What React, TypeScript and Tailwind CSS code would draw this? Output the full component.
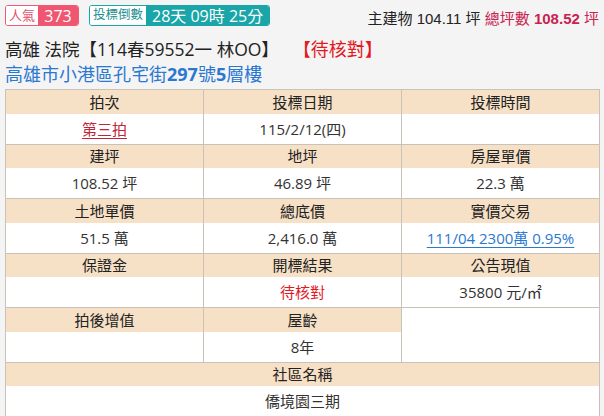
import type { ReactNode } from 'react'

const FONT = '"Open Sans", "Noto Sans CJK TC", sans-serif'

type Cell = { text: ReactNode; span?: number; rowSpan?: number }

function HeadRow({ cells }: { cells: Cell[] }) {
  return (
    <tr className="h-[24px] bg-[#f6e0c6]">
      {cells.map((c, i) => (
        <td
          key={i}
          colSpan={c.span}
          rowSpan={c.rowSpan}
          className={c.rowSpan ? 'border border-[#c9c2b8] bg-white' : 'border-x border-t border-[#c9c2b8] text-center text-[15px] leading-[22px] text-[#222]'}
        >
          {c.text}
        </td>
      ))}
    </tr>
  )
}

function ValueRow({ cells }: { cells: Cell[] }) {
  return (
    <tr className="h-[30px] bg-white">
      {cells.map((c, i) => (
        <td
          key={i}
          colSpan={c.span}
          className="border-x border-b border-[#c9c2b8] text-center text-[15px] leading-[30px] text-[#333]"
        >
          {c.text}
        </td>
      ))}
    </tr>
  )
}

export default function App() {
  return (
    <div className="h-[416px] w-[604px] overflow-hidden bg-[#f4f4f5]" style={{ fontFamily: FONT }}>
      {/* top badges */}
      <div className="flex h-[30px] items-center px-[5px] pt-[1px]">
        <div className="flex h-[21px] overflow-hidden rounded-[3px] border border-[#ef5a75]">
          <span className="flex w-[32px] items-center justify-center bg-white text-[13px] text-[#e0506c]">人氣</span>
          <span className="flex w-[40px] items-center justify-center bg-[#f0566f] text-[16px] text-white">373</span>
        </div>
        <div className="ml-[10px] flex h-[21px] overflow-hidden rounded-[3px] border border-[#1aa5a6]">
          <span className="flex w-[56px] items-center justify-center bg-white text-[12.5px] text-[#1a8f91]">投標倒數</span>
          <span className="flex items-center justify-center whitespace-nowrap bg-[#1aa6a8] px-[6px] text-[16px] text-white">28天 09時 25分</span>
        </div>
        <div className="ml-auto pt-[7px] text-[15px] text-[#222]" style={{ fontFamily: '"Liberation Sans", "Noto Sans CJK TC", sans-serif' }}>
          主建物 104.11 坪 <span className="text-[#c8234f]">總坪數 <b>108.52</b> 坪</span>
        </div>
      </div>

      {/* title */}
      <div className="flex h-[28px] items-center px-[5px] pt-[10px] text-[17.5px] text-[#222]">
        <span>高雄 法院【114春59552一 林OO】</span>
        <span className="ml-[14px] text-[18px] text-[#e3191f]">【待核對】</span>
      </div>
      <div className="flex h-[26px] items-center px-[5px] pt-[6px] text-[18px] text-[#2b78d0]">
        高雄市小港區孔宅街<b>297</b>號<b>5</b>層樓
      </div>

      {/* table */}
      <div className="px-[5px] pt-[5px]">
        <table className="w-[594px] table-fixed border-collapse border border-[#b5aea6]">
          <colgroup>
            <col className="w-[198px]" />
            <col className="w-[198px]" />
            <col className="w-[198px]" />
          </colgroup>
          <tbody>
            <HeadRow cells={[{ text: '拍次' }, { text: '投標日期' }, { text: '投標時間' }]} />
            <ValueRow
              cells={[
                { text: <span className="text-[#c0263a] underline decoration-[#c0263a] underline-offset-[3px]">第三拍</span> },
                { text: '115/2/12(四)' },
                { text: '' },
              ]}
            />
            <HeadRow cells={[{ text: '建坪' }, { text: '地坪' }, { text: '房屋單價' }]} />
            <ValueRow cells={[{ text: '108.52 坪' }, { text: '46.89 坪' }, { text: '22.3 萬' }]} />
            <HeadRow cells={[{ text: '土地單價' }, { text: '總底價' }, { text: '實價交易' }]} />
            <ValueRow
              cells={[
                { text: '51.5 萬' },
                { text: '2,416.0 萬' },
                { text: <span className="text-[#2b78d0] underline decoration-[#2b78d0] underline-offset-[3px]">111/04 2300萬 0.95%</span> },
              ]}
            />
            <HeadRow cells={[{ text: '保證金' }, { text: '開標結果' }, { text: '公告現值' }]} />
            <ValueRow cells={[{ text: '' }, { text: <span className="text-[#e3191f]">待核對</span> }, { text: '35800 元/㎡' }]} />
            <HeadRow cells={[{ text: '拍後增值' }, { text: '屋齡' }, { text: '', rowSpan: 2 }]} />
            <tr className="h-[30px] bg-white">
              <td className="border-x border-b border-[#c9c2b8]" />
              <td className="border-x border-b border-[#c9c2b8] text-center text-[15px] leading-[30px] text-[#333]">8年</td>
            </tr>
            <HeadRow cells={[{ text: '社區名稱', span: 3 }]} />
            <ValueRow cells={[{ text: '僑境園三期', span: 3 }]} />
          </tbody>
        </table>
      </div>
    </div>
  )
}
